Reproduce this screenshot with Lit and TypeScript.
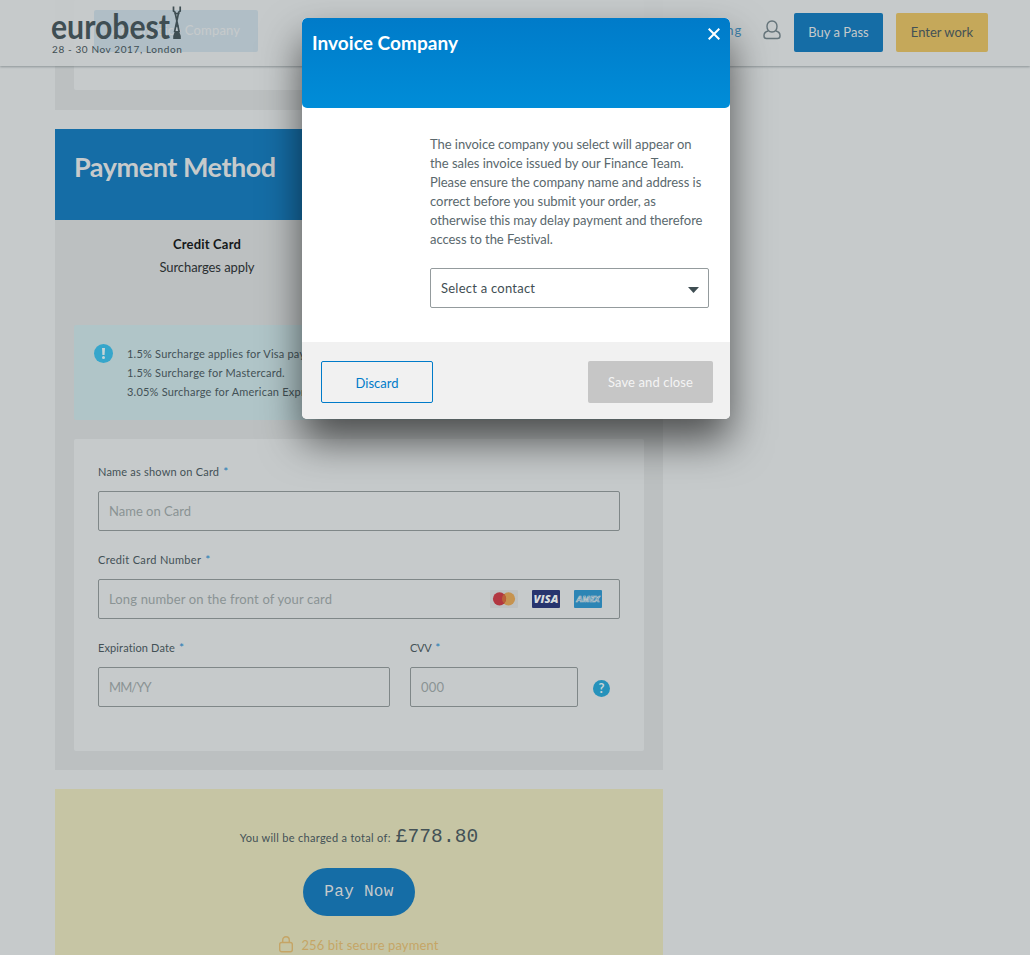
import { LitElement, html, css, svg } from "lit";
import { customElement, property } from "lit/decorators.js";

@customElement("site-header")
class SiteHeader extends LitElement {
  static styles = css`
    :host { display: flex; box-sizing: border-box; height: 66px; padding: 0 42px 0 52px; justify-content: space-between;
      background: rgba(198, 202, 203, 0.88); border-bottom: 0; box-shadow: 0 1px 2px rgba(60, 75, 80, 0.4); }
    .brand { padding-top: 5px; color: #3f4e53; }
    .logo { display: block; overflow: visible; }
    .word { font: 700 34px Lato, sans-serif; fill: #3f4e53; }
    .date { font-size: 10px; line-height: 14px; letter-spacing: 0.6px; margin-top: 0; white-space: nowrap; transform: translateY(-1px); }
    .nav { display: flex; padding-top: 13px; }
    .link { color: #3f82ab; font-size: 13px; line-height: 35px; letter-spacing: 0.8px; margin-right: 21px; }
    .user { margin: 7px 13px 0 0; }
    .btn { box-sizing: border-box; height: 39px; border-radius: 2px; font-size: 13px; line-height: 39px; text-align: center; white-space: nowrap; }
    .buy { width: 89px; background: #156da6; color: #c6cacb; margin-right: 13px; }
    .enter { width: 92px; background: #c5a85a; color: #435156; }
  `;
  render() {
    return html`
      <div class="brand">
        <svg class="logo" width="132" height="38" viewBox="0 0 132 38">
          <text class="word" x="-1" y="34" textLength="119" lengthAdjust="spacingAndGlyphs">eurobest</text>
          <g fill="none" stroke="#3f4e53" stroke-width="1.7">
            <path d="M121.5 1.5v4.5l1.5 1.2 4.2 20M128.2 1.5v4.5l-1.5 1.2-4.2 20" />
            <path d="M122.5 8.5h5M124 21h2.500" stroke-width="1.3" />
          </g>
          <path d="M123 26h4l1.800 5v3h-7.600v-3z" fill="#3f4e53" />
        </svg>
        <div class="date">28 - 30 Nov 2017, London</div>
      </div>
      <div class="nav">
        <span class="link">Judging</span>
        <svg class="user" width="18" height="20" viewBox="0 0 18 20" fill="none" stroke="#65747a" stroke-width="1.4">
          <path d="M9 1C5.900 1 4 3.200 4 6.300 4 9.800 6 12 9 12s5-2.200 5-5.700C14 3.200 12.100 1 9 1z" />
          <path d="M5.200 11C2.500 11.600 1 13 1 15.600V16c0 1.700.8 2.500 2.500 2.500h11c1.700 0 2.500-.8 2.500-2.500v-.4c0-2.600-1.500-4-4.200-4.600" />
        </svg>
        <div class="btn buy">Buy a Pass</div>
        <div class="btn enter">Enter work</div>
      </div>`;
  }
}

@customElement("form-field")
class FormField extends LitElement {
  @property() label = "";
  @property() hint = "";
  @property({ type: Number }) gap = 0.2;
  @property({ type: Number }) hintGap = 0;
  static styles = css`
    :host { display: block; }
    .label { font-size: 11px; line-height: 16px; color: #435156; white-space: nowrap; }
    .star { color: #1f7bb5; margin-left: 4px; font-size: 12px; }
    .box { box-sizing: border-box; height: 40px; margin-top: 11px; border: 1px solid #7f8788; border-radius: 2px; padding: 0 17px 0 10px;
      display: flex; align-items: center; justify-content: space-between; color: #8a9394; font-size: 13px; white-space: nowrap; }
  `;
  render() {
    return html`<div class="label"><span style="letter-spacing:${this.gap}px">${this.label}</span><span class="star">*</span></div>
      <div class="box"><span style="letter-spacing:${this.hintGap}px">${this.hint}</span><slot></slot></div>`;
  }
}

@customElement("invoice-dialog")
class InvoiceDialog extends LitElement {
  static styles = css`
    :host { display: flex; flex-direction: column; width: 428px; height: 401px; border-radius: 5px; background: #fff; overflow: hidden;
      box-shadow: 0 22px 40px rgba(0, 0, 0, 0.6); }
    .head { box-sizing: border-box; height: 90px; border-radius: 5px; background: linear-gradient(#007bc9, #008dd8); color: #fff;
      display: flex; justify-content: space-between; padding: 10px 10px 0 10px; }
    .title { font-size: 19px; font-weight: 700; line-height: 30px; letter-spacing: 0.05px; }
    .body { height: 234px; box-sizing: border-box; padding: 27px 21px 0 128px; }
    .copy { font-size: 13px; line-height: 19px; color: #5a686d; letter-spacing: -0.04px; white-space: nowrap; }
    .select { box-sizing: border-box; height: 40px; margin-top: 19px; border: 1px solid #949b9d; border-radius: 2px; padding: 0 9px 0 10px;
      display: flex; justify-content: space-between; align-items: center; font-size: 13px; letter-spacing: 0.24px; color: #3f4e53; }
    .arrow { margin-top: 4px; }
    .foot { flex: 1; background: #f1f1f1; display: flex; justify-content: space-between; padding: 19px 17px 0 19px; }
    .btn { box-sizing: border-box; height: 42px; border-radius: 2px; font-size: 13px; text-align: center; line-height: 42px; }
    .discard { width: 112px; border: 1px solid #007bc9; color: #007bc9; line-height: 42px; }
    .save { width: 125px; background: #c6c6c6; color: #f4f4f4; letter-spacing: 0.12px; line-height: 43px; }
  `;
  render() {
    return html`
      <div class="head">
        <div class="title">Invoice Company</div>
        <svg width="12" height="12" viewBox="0 0 12 12" stroke="#fff" stroke-width="2"><path d="M.7.7l10.600 10.600M11.300.7L.7 11.300" /></svg>
      </div>
      <div class="body">
        <div class="copy">The invoice company you select will appear on<br />the sales invoice issued by our Finance Team.<br />Please ensure the company name and address is<br />correct before you submit your order, as<br />otherwise this may delay payment and therefore<br />access to the Festival.</div>
        <div class="select"><span>Select a contact</span>
          <svg class="arrow" width="11" height="6" viewBox="0 0 11 6"><path d="M0 0h11L5.500 6z" fill="#3f4e53" /></svg></div>
      </div>
      <div class="foot">
        <div class="btn discard">Discard</div>
        <div class="btn save">Save and close</div>
      </div>`;
  }
}

@customElement("app-root")
class AppRoot extends LitElement {
  static styles = css`
    :host { display: block; position: relative; width: 1030px; height: 955px; overflow: hidden; background: #c6cacb;
      font-family: Lato, sans-serif; color: #435156; }
    .header { position: absolute; top: 0; left: 0; right: 0; }
    .dialog { position: absolute; top: 18px; left: 302px; }
    .column { width: 608px; margin-left: 55px; }
    .panel { background: #bcc0c1; }
    .company { height: 110px; box-sizing: border-box; padding: 0 19px 20px; margin-bottom: 19px; }
    .sheet { background: #c6cacb; border-radius: 2px; box-sizing: border-box; }
    .company .sheet { height: 90px; padding: 10px 20px; }
    .add { width: 164px; height: 42px; border-radius: 2px; background: #156da6; color: #c6cacb; font-size: 13px; line-height: 41px; text-align: center; box-sizing: border-box; letter-spacing: .2px; white-space: nowrap; }
    .banner { height: 91px; box-sizing: border-box; padding: 20px 19px; background: #156da6; color: #c6cacb; font-weight: 700; font-size: 27px; line-height: 36px; letter-spacing: -0.45px; }
    .methods { display: grid; grid-template-columns: 1fr 1fr; height: 105px; box-sizing: border-box; padding-top: 13px; text-align: center; font-size: 13px; line-height: 23px; color: #2a2f31; }
    .methods b { color: #14181a; letter-spacing: 0.19px; }
    .methods .sub { letter-spacing: -0.09px; }
    .note { margin: 0 19px; height: 95px; box-sizing: border-box; padding: 19px 20px; border-radius: 2px; background: #b0c5c8; display: flex; gap: 14px; font-size: 11px; line-height: 19px; letter-spacing: 0.22px; white-space: nowrap; }
    .card { margin: 19px 19px 0; height: 312px; padding: 25px 24px 0; }
    .payment { height: 641px; margin-bottom: 19px; }
    .field { margin-bottom: 21px; }
    .icons { display: flex; gap: 14px; }
    .row { display: flex; }
    .exp { width: 292px; margin-right: 20px; }
    .cvv { width: 168px; margin-right: 15px; }
    .help { margin-top: 40px; }
    .total { height: 166px; background: #c6c5a4; display: flex; flex-direction: column; align-items: center; }
    .sum { margin-top: 35px; height: 28px; line-height: 28px; font-size: 11px; letter-spacing: 0.3px; white-space: nowrap; }
    .amount { font: 19.500px/24px "DejaVu Sans Mono", monospace; font-family: "Liberation Mono", monospace; letter-spacing: 0.1px; margin-left: 5px; }
    .pay { width: 112px; height: 48px; margin-top: 16px; border-radius: 24px; background: #156da6; color: #c6cacb; font: 16px/48px "Liberation Mono", monospace; letter-spacing: 0.3px; text-align: center; }
    .secure { display: flex; gap: 8px; margin-top: 20px; font-size: 13px; line-height: 19px; color: #c5a566; letter-spacing: 0.11px; }
    .glyph { font: 700 13px Lato, sans-serif; }
    .visa { font: italic 800 11px "Open Sans", sans-serif; fill: #d8dcdd; }
    .amex { font: italic 700 8px "Open Sans", sans-serif; fill: #2c85b5; stroke: #c6cacb; stroke-width: 0.6; }
  `;
  render() {
    return html`
      <div class="column">
        <div class="panel company"><div class="sheet"><div class="add">Add Invoice Company</div></div></div>
        <div class="panel payment">
          <div class="banner">Payment Method</div>
          <div class="methods"><div><b>Credit Card</b><div class="sub">Surcharges apply</div></div></div>
          <div class="note">
            <svg width="19" height="19" viewBox="0 0 19 19"><circle cx="9.500" cy="9.500" r="9.500" fill="#36a6cb" /><path d="M8 4h3l-.4 7H8.400z" fill="#c6d4d6" /><circle cx="9.500" cy="13.600" r="1.500" fill="#c6d4d6" /></svg>
            <div>1.5% Surcharge applies for Visa payments.<br />1.5% Surcharge for Mastercard.<br />3.05% Surcharge for American Express.</div>
          </div>
          <div class="sheet card">
            <form-field class="field" label="Name as shown on Card" hint="Name on Card"></form-field>
            <form-field class="field" label="Credit Card Number" gap="0.32" hint="Long number on the front of your card" hintGap="0.15">
              <div class="icons">
                <svg width="28" height="18" viewBox="0 0 28 18"><rect width="28" height="18" rx="1" fill="#bec1c2" /><circle cx="18.500" cy="8.800" r="6.600" fill="#c6934f" /><circle cx="9.500" cy="8.800" r="6.600" fill="#b23640" /><path d="M14 4a6.600 6.600 0 0 1 0 9.600A6.600 6.600 0 0 1 14 4z" fill="#b96038" /></svg>
                <svg width="28" height="18" viewBox="0 0 28 18"><rect width="28" height="18" rx="1" fill="#27346e" /><text class="visa" x="1.500" y="13.200" textLength="25" lengthAdjust="spacingAndGlyphs">VISA</text></svg>
                <svg width="28" height="18" viewBox="0 0 28 18"><rect width="28" height="18" rx="1" fill="#2c85b5" /><text class="amex" x="2.500" y="11.800" textLength="23" lengthAdjust="spacingAndGlyphs">AMEX</text></svg>
              </div>
            </form-field>
            <div class="row">
              <form-field class="exp" label="Expiration Date" gap="0.12" hint="MM/YY" hintGap="-0.9"></form-field>
              <form-field class="cvv" label="CVV" gap="-0.3" hint="000" hintGap="0.2"></form-field>
              <svg class="help" width="17" height="17" viewBox="0 0 17 17"><circle cx="8.500" cy="8.500" r="8.500" fill="#2692bb" /><text class="glyph" x="8.500" y="13.200" text-anchor="middle" fill="#c6d4d6">?</text></svg>
            </div>
          </div>
        </div>
        <div class="total">
          <div class="sum">You will be charged a total of:<span class="amount">£778.80</span></div>
          <div class="pay">Pay Now</div>
          <div class="secure">
            <svg width="14" height="17" viewBox="0 0 14 17" fill="none" stroke="#c5a566" stroke-width="1.400"><rect x=".7" y="6.500" width="12.600" height="9.300" rx="2" /><path d="M3.700 6.500V4.200C3.700 2 5 .8 7 .8s3.300 1.200 3.300 3.400v2.300" /></svg>
            <span>256 bit secure payment</span>
          </div>
        </div>
      </div>
      <site-header class="header"></site-header>
      <invoice-dialog class="dialog"></invoice-dialog>`;
  }
}
